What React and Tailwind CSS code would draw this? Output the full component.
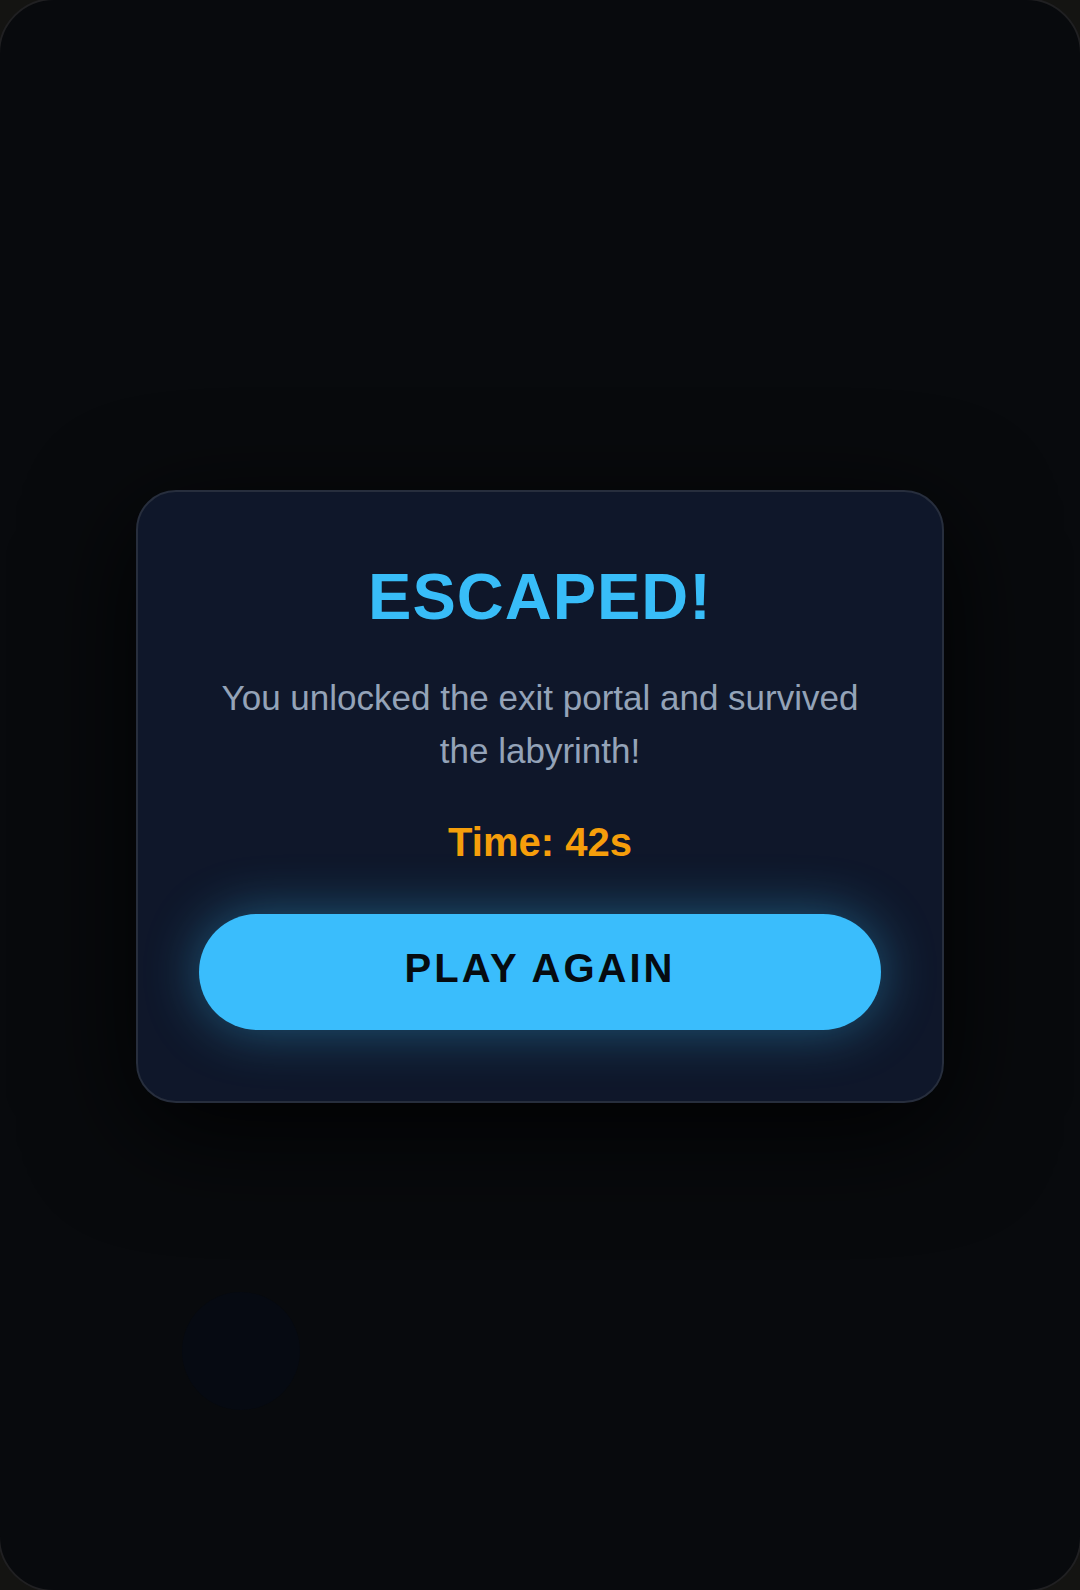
export default function App() {
  return (
    <div className="grid min-h-screen overflow-hidden bg-[#141412] font-['Liberation_Sans',Arial,sans-serif]">
      <main className="relative -m-0.5 flex items-center justify-center overflow-hidden rounded-[56px] border-2 border-[#202022] bg-[#080a0d] px-[136px] pt-[50px] pb-12">
        {/* Joystick dimmed behind the result overlay */}
        <div className="absolute bottom-[180px] left-[182px] size-[118px] rounded-full bg-[#060a12]" />
        <section
          role="dialog"
          aria-labelledby="result-title"
          className="relative w-full rounded-[40px] border-2 border-[#272e3d] bg-[#0f172a] px-[61px] pt-[69px] pb-[71px] text-center shadow-[0_27px_108px_rgba(0,0,0,0.9)]"
        >
          <h1 id="result-title" className="text-[65px] leading-[72px] font-bold tracking-[1px] text-[#38bdf8]">
            ESCAPED!
          </h1>
          <p className="mt-[38px] text-[35px] leading-[53px] text-[#94a3b8]">
            You unlocked the exit portal and survived the labyrinth!
          </p>
          <p className="mt-[42px] text-[40px] leading-[46px] font-bold text-[#f59e0b]">Time: 42s</p>
          <button
            type="button"
            className="mt-[49px] flex h-[116px] w-full items-center justify-center rounded-full bg-[#3abdfc] pb-2 text-[40px] font-bold tracking-[3px] text-[#060b10] shadow-[0_0_54px_rgba(56,189,248,0.4)]"
          >
            PLAY AGAIN
          </button>
        </section>
      </main>
    </div>
  );
}
